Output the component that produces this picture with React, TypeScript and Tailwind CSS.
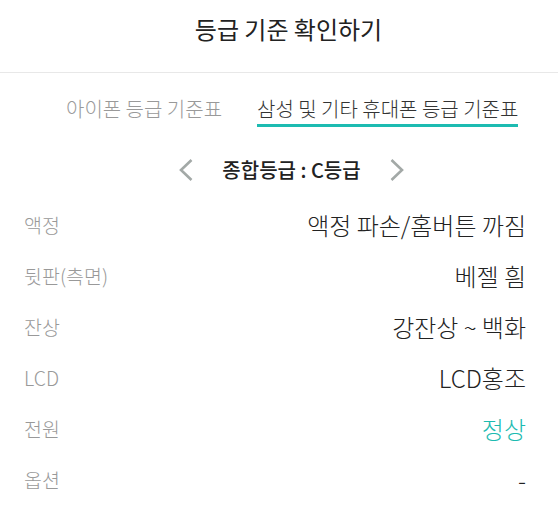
import React from "react";

const rows: { label: string; value: string; teal?: boolean }[] = [
  { label: "액정", value: "액정 파손/홈버튼 까짐" },
  { label: "뒷판(측면)", value: "베젤 흼" },
  { label: "잔상", value: "강잔상 ~ 백화" },
  { label: "LCD", value: "LCD홍조" },
  { label: "전원", value: "정상", teal: true },
  { label: "옵션", value: "-" },
];

export default function App() {
  return (
    <div
      className="w-[558px] h-[511px] bg-white overflow-hidden"
      style={{ fontFamily: '"Noto Sans CJK KR", "Noto Sans", sans-serif' }}
    >
      <div className="h-[73px] border-b border-[#e8e8e8] flex justify-center pt-[17px] pl-[19px]">
        <span className="text-[24px] text-[#222] leading-none">등급 기준 확인하기</span>
      </div>
      <div className="flex pl-[66px] gap-[35px] pt-[21px]">
        <div className="text-[20px] font-light text-[#999] leading-[30px]">아이폰 등급 기준표</div>
        <div className="text-[20px] font-light text-[#333] leading-[30px] border-b-[3px] border-[#1dbbb1]">
          삼성 및 기타 휴대폰 등급 기준표
        </div>
      </div>
      <div className="flex items-center justify-center gap-[29px] pl-[25px] mt-[28px] h-[30px]">
        <svg width="14" height="22" viewBox="0 0 14 22" fill="none">
          <path d="M12.5 1 L2 11 L12.5 21" stroke="#a3a9a7" strokeWidth="2.6" />
        </svg>
        <span className="text-[20px] font-medium text-[#222]">종합등급 : C등급</span>
        <svg width="14" height="22" viewBox="0 0 14 22" fill="none">
          <path d="M1.5 1 L12 11 L1.5 21" stroke="#a3a9a7" strokeWidth="2.6" />
        </svg>
      </div>
      <div className="pl-[24px] pr-[32px] mt-[14px]">
        {rows.map((r) => (
          <div key={r.label} className="flex items-center justify-between h-[51px]">
            <span className="text-[19.5px] font-light text-[#999]">{r.label}</span>
            <span className={`text-[24px] font-light ${r.teal ? "text-[#1dbbb1]" : "text-[#222]"}`}>{r.value}</span>
          </div>
        ))}
      </div>
    </div>
  );
}
